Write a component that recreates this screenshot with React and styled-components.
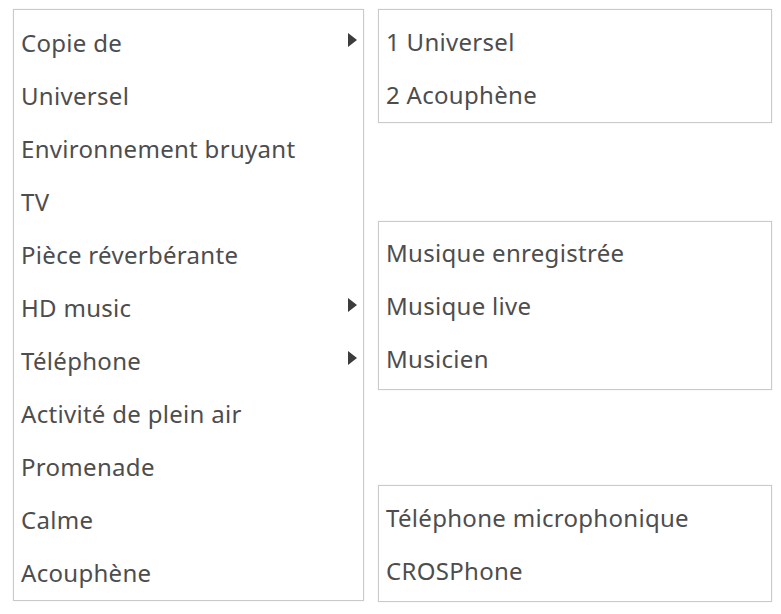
import styled, { createGlobalStyle } from "styled-components";

const Global = createGlobalStyle`
    html, body {
        margin: 0;
        padding: 0;
        background: #ffffff;
    }
    body {
        font-family: "Noto Sans", "Open Sans", sans-serif;
    }
`;

const Page = styled.div`
    display: flex;
    align-items: flex-start;
    gap: 14px;
    width: 781px;
    height: 614px;
    padding: 9px 0 0 13px;
    box-sizing: border-box;
    overflow: hidden;
`;

const Menu = styled.ul`
    list-style: none;
    margin: ${(p) => p.$top || 0}px 0 0 0;
    padding: ${(p) => p.$pad || 6}px 0 ${(p) => p.$padBottom || 0}px 0;
    width: ${(p) => p.$width}px;
    box-sizing: border-box;
    background: #ffffff;
    border: 1px solid #cacaca;
    box-shadow: 0 0 1px rgba(0, 0, 0, 0.15);
`;

const Flyouts = styled.div`
    display: flex;
    flex-direction: column;
`;

const Item = styled.li`
    display: flex;
    align-items: center;
    justify-content: space-between;
    height: 53px;
    padding: 0 6px 0 7px;
    font-size: 24px;
    letter-spacing: 0.3px;
    color: #4d4d4d;
    white-space: nowrap;
`;

const Arrow = styled.span`
    width: 0;
    height: 0;
    border-top: 7px solid transparent;
    border-bottom: 7px solid transparent;
    border-left: 9px solid #3c3c3c;
    margin-bottom: 5px;
`;

const main = [
    ["Copie de", true],
    ["Universel"],
    ["Environnement bruyant"],
    ["TV"],
    ["Pièce réverbérante"],
    ["HD music", true],
    ["Téléphone", true],
    ["Activité de plein air"],
    ["Promenade"],
    ["Calme"],
    ["Acouphène"],
];

const subs = [
    { top: 0, pad: 5, padBottom: 1, items: ["1 Universel", "2 Acouphène"] },
    { top: 98, pad: 4, padBottom: 4, items: ["Musique enregistrée", "Musique live", "Musicien"] },
    { top: 95, pad: 5, padBottom: 4, items: ["Téléphone microphonique", "CROSPhone"] },
];

export default function App() {
    return <>
        <Global />
        <Page>
            <Menu $width={351} $pad={6} $padBottom={1}>
                {main.map(([label, more]) => (
                    <Item key={label}>
                        {label}
                        {more && <Arrow />}
                    </Item>
                ))}
            </Menu>
            <Flyouts>
                {subs.map((s, i) => (
                    <Menu key={i} $width={394} $top={s.top} $pad={s.pad} $padBottom={s.padBottom}>
                        {s.items.map((label) => (
                            <Item key={label}>{label}</Item>
                        ))}
                    </Menu>
                ))}
            </Flyouts>
        </Page>
    </>;
}
